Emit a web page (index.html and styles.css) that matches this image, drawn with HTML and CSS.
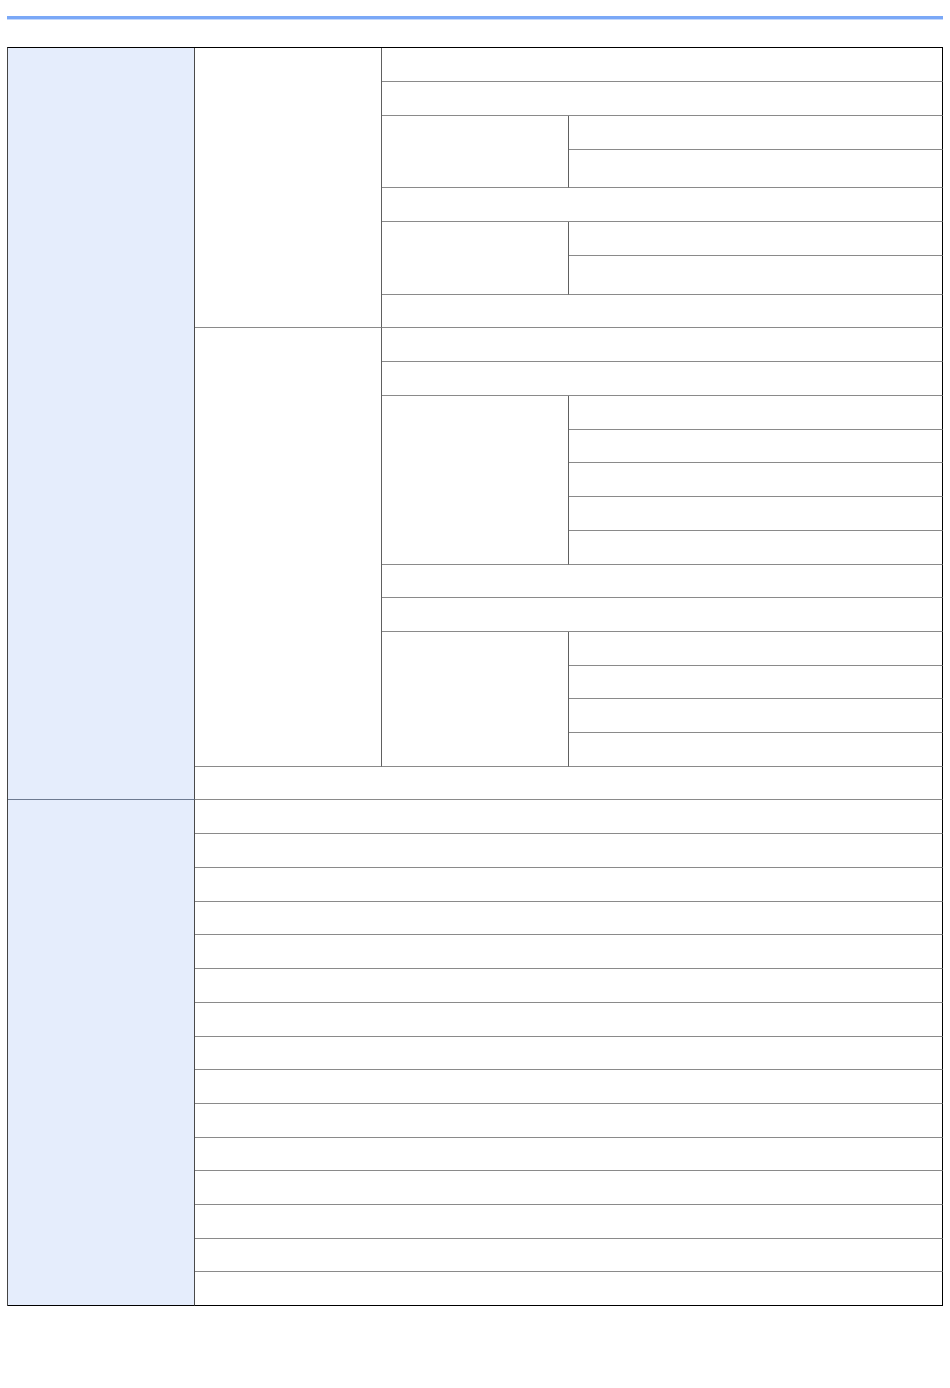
FILE: index.html
```html
<!DOCTYPE html>
<html lang="en">
<head>
  <meta charset="UTF-8">
  <title>Settings Table</title>
  <link rel="stylesheet" href="styles.css">
</head>
<body>

  <div class="page">
    <div class="rule"></div>

    <table class="grid">
      <colgroup>
        <col class="c1"><col class="c2"><col class="c3"><col class="c4">
      </colgroup>
      <!-- section 1 -->
      <tr>
        <td class="side" rowspan="22"></td>
        <td rowspan="8"></td>
        <td colspan="2"></td>
      </tr>
      <tr><td colspan="2"></td></tr>
      <tr><td rowspan="2"></td><td></td></tr>
      <tr class="h38"><td></td></tr>
      <tr><td colspan="2"></td></tr>
      <tr><td rowspan="2"></td><td></td></tr>
      <tr class="h39"><td></td></tr>
      <tr class="h33"><td colspan="2"></td></tr>

      <tr>
        <td rowspan="13"></td>
        <td colspan="2"></td>
      </tr>
      <tr><td colspan="2"></td></tr>
      <tr><td rowspan="5"></td><td></td></tr>
      <tr class="h33"><td></td></tr>
      <tr><td></td></tr>
      <tr><td></td></tr>
      <tr><td></td></tr>
      <tr class="h33"><td colspan="2"></td></tr>
      <tr><td colspan="2"></td></tr>
      <tr><td rowspan="4"></td><td></td></tr>
      <tr class="h33"><td></td></tr>
      <tr><td></td></tr>
      <tr><td></td></tr>
      <tr class="h33"><td colspan="3"></td></tr>

      <!-- section 2 -->
      <tr>
        <td class="side last" rowspan="15"></td>
        <td colspan="3"></td>
      </tr>
      <tr><td colspan="3"></td></tr>
      <tr><td colspan="3"></td></tr>
      <tr class="h33"><td colspan="3"></td></tr>
      <tr><td colspan="3"></td></tr>
      <tr><td colspan="3"></td></tr>
      <tr><td colspan="3"></td></tr>
      <tr class="h33"><td colspan="3"></td></tr>
      <tr><td colspan="3"></td></tr>
      <tr><td colspan="3"></td></tr>
      <tr class="h33"><td colspan="3"></td></tr>
      <tr><td colspan="3"></td></tr>
      <tr><td colspan="3"></td></tr>
      <tr class="h33"><td colspan="3"></td></tr>
      <tr class="bottom"><td colspan="3"></td></tr>
    </table>
  </div>

</body>
</html>
```

FILE: styles.css
```css
body {
  margin: 0;
  background: #fff;
  font-family: 'Liberation Sans', Arial, sans-serif;
}
.page {
  padding: 16px 7px 0 7px;
}
.rule {
  width: 936px;
  height: 3px;
  background: #7aa8f7;
  border-bottom: 1px solid #c4d8fb;
}
.grid {
  margin-top: 27px;
  width: 936px;
  table-layout: fixed;
  border-collapse: separate;
  border-spacing: 0;
  border-top: 1px solid #000;
  border-left: 1px solid #444;
}
.c1, .c2, .c3 {
  width: 187px;
}
.c4 {
  width: 374px;
}
tr {
  height: 34px;
}
tr.h33 {
  height: 33px;
}
tr.h38 {
  height: 38px;
}
tr.h39 {
  height: 39px;
}
td {
  padding: 0;
  box-sizing: border-box;
  border-right: 1px solid #606060;
  border-bottom: 1px solid #8a8a8a;
}
td:last-child {
  border-right-color: #000;
}
.side {
  background: #e5edfc;
  border-right-color: #4a4a4a;
  border-bottom-color: #6d7a90;
}
.side.last,
tr.bottom td {
  border-bottom-color: #000;
}
```
